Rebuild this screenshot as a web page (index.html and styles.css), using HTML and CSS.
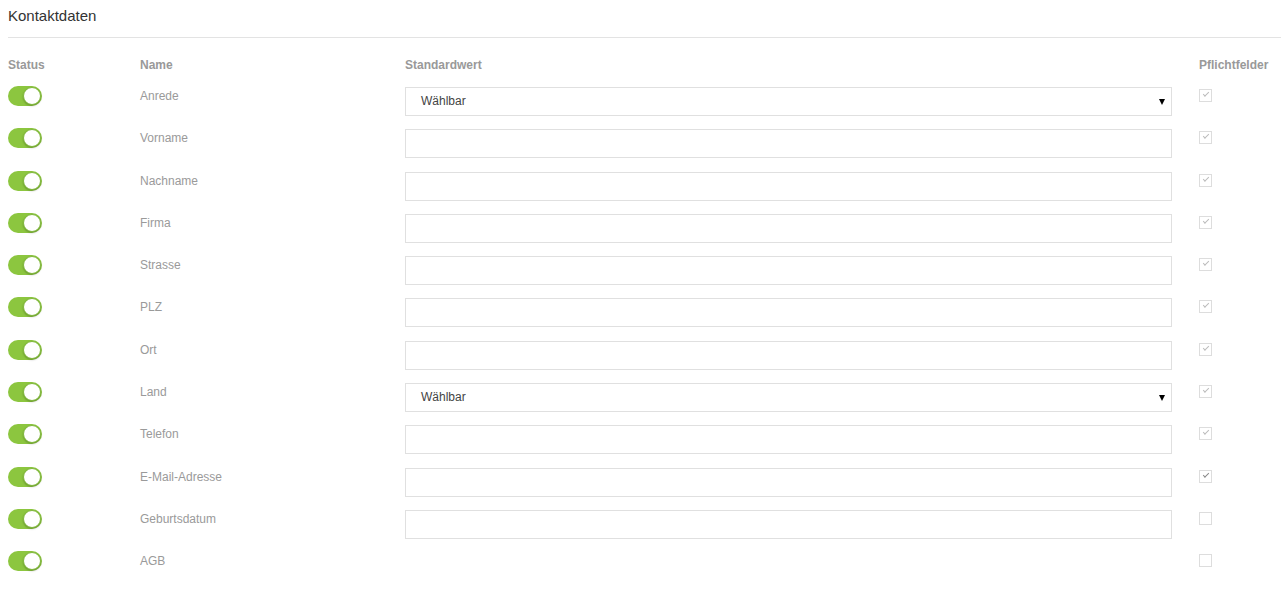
FILE: index.html
```html
<!DOCTYPE html>
<html lang="de">
<head>
<meta charset="utf-8">
<title>Kontaktdaten</title>
<link rel="stylesheet" href="styles.css">
</head>
<body>
<div class="panel">
  <h2 class="title">Kontaktdaten</h2>
  <div class="rule"></div>
  <div class="grid">
    <div class="head">Status</div>
    <div class="head">Name</div>
    <div class="head">Standardwert</div>
    <div class="head">Pflichtfelder</div>

    <div class="cell"><span class="toggle"><span class="knob"></span></span></div>
    <div class="cell name">Anrede</div>
    <div class="cell"><div class="select">Wählbar<span class="caret"></span></div></div>
    <div class="cell"><span class="check on"></span></div>

    <div class="cell"><span class="toggle"><span class="knob"></span></span></div>
    <div class="cell name">Vorname</div>
    <div class="cell"><div class="input"></div></div>
    <div class="cell"><span class="check on"></span></div>

    <div class="cell"><span class="toggle"><span class="knob"></span></span></div>
    <div class="cell name">Nachname</div>
    <div class="cell"><div class="input"></div></div>
    <div class="cell"><span class="check on"></span></div>

    <div class="cell"><span class="toggle"><span class="knob"></span></span></div>
    <div class="cell name">Firma</div>
    <div class="cell"><div class="input"></div></div>
    <div class="cell"><span class="check on"></span></div>

    <div class="cell"><span class="toggle"><span class="knob"></span></span></div>
    <div class="cell name">Strasse</div>
    <div class="cell"><div class="input"></div></div>
    <div class="cell"><span class="check on"></span></div>

    <div class="cell"><span class="toggle"><span class="knob"></span></span></div>
    <div class="cell name">PLZ</div>
    <div class="cell"><div class="input"></div></div>
    <div class="cell"><span class="check on"></span></div>

    <div class="cell"><span class="toggle"><span class="knob"></span></span></div>
    <div class="cell name">Ort</div>
    <div class="cell"><div class="input"></div></div>
    <div class="cell"><span class="check on"></span></div>

    <div class="cell"><span class="toggle"><span class="knob"></span></span></div>
    <div class="cell name">Land</div>
    <div class="cell"><div class="select">Wählbar<span class="caret"></span></div></div>
    <div class="cell"><span class="check on"></span></div>

    <div class="cell"><span class="toggle"><span class="knob"></span></span></div>
    <div class="cell name">Telefon</div>
    <div class="cell"><div class="input"></div></div>
    <div class="cell"><span class="check on"></span></div>

    <div class="cell"><span class="toggle"><span class="knob"></span></span></div>
    <div class="cell name">E-Mail-Adresse</div>
    <div class="cell"><div class="input"></div></div>
    <div class="cell"><span class="check on dark"></span></div>

    <div class="cell"><span class="toggle"><span class="knob"></span></span></div>
    <div class="cell name">Geburtsdatum</div>
    <div class="cell"><div class="input"></div></div>
    <div class="cell"><span class="check"></span></div>

    <div class="cell"><span class="toggle"><span class="knob"></span></span></div>
    <div class="cell name">AGB</div>
    <div class="cell"></div>
    <div class="cell"><span class="check"></span></div>
  </div>
</div>
</body>
</html>
```

FILE: styles.css
```css
html, body {
  margin: 0;
  padding: 0;
  background: #fff;
}
body {
  font-family: "Liberation Sans", Arial, sans-serif;
  color: #333;
}
.panel {
  padding: 0 0 0 8px;
}
.title {
  margin: 0;
  padding-top: 7px;
  font-size: 15px;
  line-height: 18px;
  font-weight: normal;
  color: #333;
}
.rule {
  margin-top: 12px;
  height: 1px;
  background: #e3e3e3;
}
.grid {
  display: grid;
  grid-template-columns: 132px 265px 794px 1fr;
  grid-auto-rows: 42.3px;
  grid-template-rows: 48px;
}
.head {
  padding-top: 20px;
  font-size: 12px;
  line-height: 15px;
  font-weight: bold;
  color: #999;
}
.cell {
  font-size: 12px;
  line-height: 20px;
}
.name {
  padding-top: 0;
  color: #9a9a9a;
}
.toggle {
  display: block;
  position: relative;
  width: 34px;
  height: 20px;
  border-radius: 10px;
  background: #8cc63f;
}
.knob {
  position: absolute;
  top: 1px;
  right: 1px;
  width: 16px;
  height: 16px;
  border-radius: 50%;
  background: #fff;
  border: 1px solid #7fb83a;
  box-shadow: 0 1px 2px rgba(0,0,0,0.25);
}
.input, .select {
  box-sizing: border-box;
  width: 767px;
  height: 29px;
  margin-top: 1px;
  border: 1px solid #e0e0e0;
  background: #fff;
}
.select {
  position: relative;
  padding-left: 15px;
  font-size: 12px;
  line-height: 27px;
  color: #444;
}
.caret {
  position: absolute;
  right: 6px;
  top: 11px;
  width: 0;
  height: 0;
  border-left: 3.5px solid transparent;
  border-right: 3.5px solid transparent;
  border-top: 6px solid #000;
}
.check {
  display: block;
  position: relative;
  box-sizing: border-box;
  width: 13px;
  height: 13px;
  margin-top: 3px;
  border: 1px solid #ddd;
  background: #fff;
}
.check.on::after {
  content: "";
  position: absolute;
  left: 3px;
  top: 2px;
  width: 5px;
  height: 2px;
  border-left: 1px solid #bbb;
  border-bottom: 1px solid #bbb;
  transform: rotate(-45deg);
}
.check.dark::after {
  border-color: #888;
}
```
